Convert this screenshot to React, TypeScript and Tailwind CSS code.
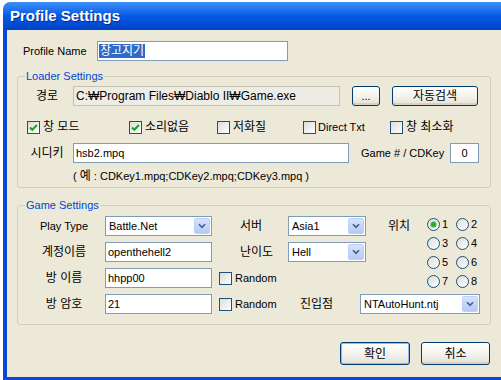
import React from 'react'

function Check({ checked = false }: { checked?: boolean }) {
  return (
    <span className="flex h-[13px] w-[13px] shrink-0 items-center justify-center border border-[#1c5180] bg-linear-to-br from-[#dcdcd7] to-white">
      {checked && (
        <svg width="11" height="11" viewBox="0 0 11 11">
          <path d="M2 5.5 L4.3 7.8 L9 3" fill="none" stroke="#21a121" strokeWidth="2" />
        </svg>
      )}
    </span>
  )
}

function Radio({ checked = false }: { checked?: boolean }) {
  return (
    <span className="flex h-[13px] w-[13px] shrink-0 items-center justify-center rounded-full border border-[#1c5180] bg-linear-to-br from-[#dcdcd7] to-white">
      {checked && <span className="h-[5px] w-[5px] rounded-full bg-[#2fa82f] shadow-[0_0_0_1px_#8fd88f]" />}
    </span>
  )
}

function Field({ value, className }: { value: string; className: string }) {
  return (
    <div className={`flex h-[20px] shrink-0 items-center border border-[#7f9db9] bg-white px-[2px] ${className}`}>
      {value}
    </div>
  )
}

function Combo({ value, className }: { value: string; className: string }) {
  return (
    <div className={`flex h-[20px] shrink-0 items-center border border-[#7f9db9] bg-white ${className}`}>
      <span className="flex-1 pl-[3px]">{value}</span>
      <span className="mr-[1px] flex h-[16px] w-[16px] items-center justify-center rounded-[2px] border border-[#bcd0f8] bg-linear-to-b from-[#d6e3fd] to-[#b4c9f5]">
        <svg width="16" height="16" viewBox="0 0 16 16">
          <path d="M4.5 6 L8 9.5 L11.5 6" fill="none" stroke="#4d6185" strokeWidth="2" />
        </svg>
      </span>
    </div>
  )
}

function Btn({ label, className, isDefault = false }: { label: string; className: string; isDefault?: boolean }) {
  return (
    <div
      className={`flex shrink-0 items-center justify-center rounded-[3px] border border-[#003c74] bg-linear-to-b from-white via-[#f4f3ee] to-[#e3e1d6] ${
        isDefault ? 'shadow-[inset_0_0_0_1px_#98b4ef]' : 'shadow-[inset_0_-2px_0_#d6d0c5]'
      } ${className}`}
    >
      {label}
    </div>
  )
}

export default function App() {
  return (
    <div className="h-[380px] w-[501px] overflow-hidden bg-white pt-[2px] pl-[3px] font-['Liberation_Sans','Noto_Sans_CJK_KR',sans-serif] text-[11px] leading-[14px] text-black">
      <div className="w-[520px]">
        {/* title bar */}
        <div className="flex h-[28px] items-center rounded-tl-[7px] bg-linear-to-b from-[#3d8ff8] via-[#0458e6] to-[#0044c8] pl-[7px] text-[15px] font-bold text-white [text-shadow:1px_1px_0_#0a2a8a]">
          Profile Settings
        </div>

        <div className="flex h-[350px] flex-col border-b-[3px] border-l-[4px] border-[#0849d6] bg-[#ece9d8]">
          {/* profile name */}
          <div className="mt-[11px] flex h-[20px] items-center">
            <span className="ml-[16px] w-[74px]">Profile Name</span>
            <div className="flex h-[20px] w-[191px] items-center border border-[#7f9db9] bg-white px-[1px] text-[12px]">
              <span className="bg-[#316ac5] px-[1px] text-white">창고지기</span>
            </div>
          </div>

          {/* loader settings */}
          <fieldset className="mt-[8px] ml-[10px] w-[474px] rounded-[3px] border border-[#d0d0bf] pb-[4px]">
            <legend className="ml-[7px] px-[1px] text-[#0046d5]">Loader Settings</legend>
            <div className="mt-[3px] flex h-[20px] items-center">
              <span className="ml-[3px] w-[52px] text-center text-[12px]">경로</span>
              <div className="flex h-[20px] w-[267px] items-center border border-[#c5c2b2] bg-[#eeede5] px-[2px] text-[12px]">
                C:₩Program Files₩Diablo II₩Game.exe
              </div>
              <Btn label="..." className="ml-[12px] h-[20px] w-[28px]" />
              <Btn label="자동검색" className="ml-[12px] h-[20px] w-[86px] text-[12px]" />
            </div>

            <div className="mt-[11px] flex h-[20px] items-center text-[12px]">
              <div className="ml-[9px] flex w-[102px] items-center gap-[3px]">
                <Check checked />
                <span>창 모드</span>
              </div>
              <div className="flex w-[88px] items-center gap-[3px]">
                <Check checked />
                <span>소리없음</span>
              </div>
              <div className="flex w-[86px] items-center gap-[3px]">
                <Check />
                <span>저화질</span>
              </div>
              <div className="flex w-[87px] items-center gap-[2px]">
                <Check />
                <span className="text-[11px]">Direct Txt</span>
              </div>
              <div className="flex items-center gap-[3px]">
                <Check />
                <span>창 최소화</span>
              </div>
            </div>

            <div className="mt-[6px] flex h-[20px] items-center">
              <span className="ml-[3px] w-[52px] text-center text-[12px]">시디키</span>
              <Field value="hsb2.mpq" className="w-[276px]" />
              <span className="ml-[12px] w-[89px] whitespace-nowrap">Game # / CDKey</span>
              <Field value="0" className="w-[29px] justify-center" />
            </div>

            <div className="mt-[6px] ml-[55px]">
              ( <span className="text-[12px]">예</span> : CDKey1.mpq;CDKey2.mpq;CDKey3.mpq )
            </div>
          </fieldset>

          {/* game settings */}
          <fieldset className="mt-[10px] ml-[10px] w-[474px] rounded-[3px] border border-[#d0d0bf] pb-[10px]">
            <legend className="ml-[7px] px-[1px] text-[#0046d5]">Game Settings</legend>
            <div className="mt-[4px] flex">
              <div className="flex flex-col gap-[6px]">
                <div className="flex h-[20px] items-center">
                  <span className="ml-[5px] w-[82px] text-center">Play Type</span>
                  <Combo value="Battle.Net" className="w-[107px]" />
                  <span className="ml-[28px] w-[48px] text-[12px]">서버</span>
                  <Combo value="Asia1" className="w-[78px]" />
                </div>
                <div className="flex h-[20px] items-center">
                  <span className="ml-[5px] w-[82px] text-center text-[12px]">계정이름</span>
                  <Field value="openthehell2" className="w-[107px]" />
                  <span className="ml-[28px] w-[48px] text-[12px]">난이도</span>
                  <Combo value="Hell" className="w-[78px]" />
                </div>
                <div className="flex h-[20px] items-center">
                  <span className="ml-[5px] w-[82px] text-center text-[12px]">방 이름</span>
                  <Field value="hhpp00" className="w-[107px]" />
                  <div className="ml-[7px] flex items-center gap-[3px]">
                    <Check />
                    <span>Random</span>
                  </div>
                </div>
              </div>

              <span className="mt-[3px] ml-[22px] w-[24px] text-[12px]">위치</span>
              <div className="mt-[1px] ml-[15px] grid grid-cols-2 gap-y-[5px]">
                {['1', '2', '3', '4', '5', '6', '7', '8'].map((n) => (
                  <div key={n} className="flex w-[29px] items-center gap-[2px]">
                    <Radio checked={n === '1'} />
                    <span>{n}</span>
                  </div>
                ))}
              </div>
            </div>

            <div className="mt-[6px] flex h-[20px] items-center">
              <span className="ml-[5px] w-[82px] text-center text-[12px]">방 암호</span>
              <Field value="21" className="w-[107px]" />
              <div className="ml-[7px] flex w-[81px] items-center gap-[3px]">
                <Check />
                <span>Random</span>
              </div>
              <span className="w-[60px] text-[12px]">진입점</span>
              <Combo value="NTAutoHunt.ntj" className="w-[120px]" />
            </div>
          </fieldset>

          {/* buttons */}
          <div className="mt-[17px] flex text-[12px]">
            <Btn label="확인" isDefault className="ml-[333px] h-[23px] w-[70px]" />
            <Btn label="취소" className="ml-[11px] h-[23px] w-[69px]" />
          </div>
        </div>
      </div>
    </div>
  )
}
